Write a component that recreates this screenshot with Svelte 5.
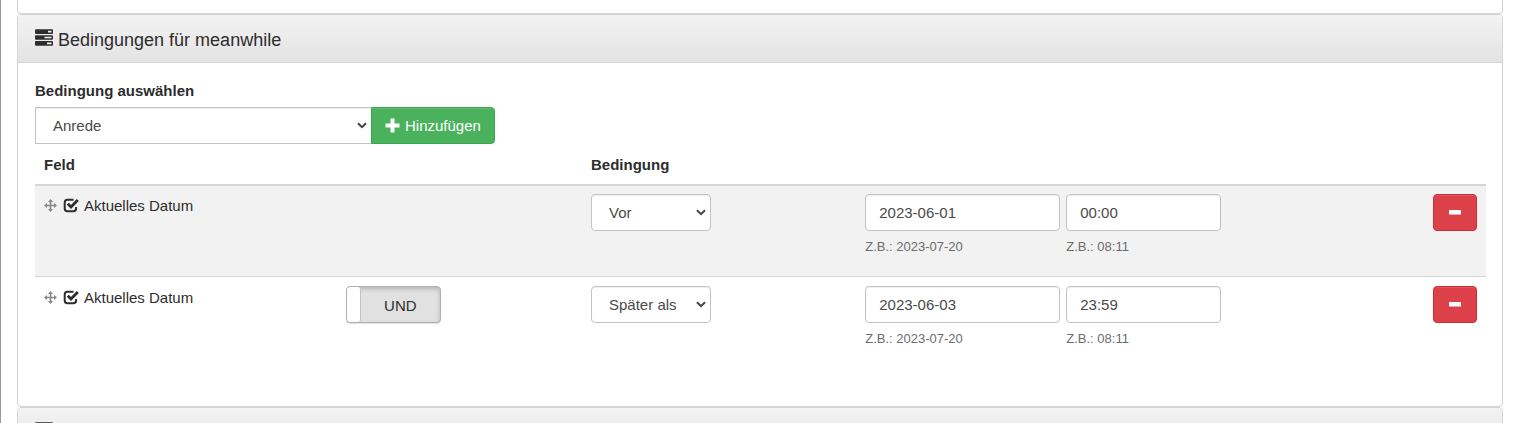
<script lang="ts">
	interface Condition {
		id: number;
		field: string;
		operator: string;
		date: string;
		time: string;
		and: boolean;
	}

	const fields = ['Anrede', 'Aktuelles Datum'];
	const operators = ['Vor', 'Später als'];

	let selectedField = $state('Anrede');
	let nextId = $state(3);
	let conditions = $state<Condition[]>([
		{ id: 1, field: 'Aktuelles Datum', operator: 'Vor', date: '2023-06-01', time: '00:00', and: true },
		{ id: 2, field: 'Aktuelles Datum', operator: 'Später als', date: '2023-06-03', time: '23:59', and: true },
	]);

	function add() {
		conditions.push({ id: nextId++, field: selectedField, operator: 'Vor', date: '', time: '', and: true });
	}

	function remove(id: number) {
		conditions = conditions.filter((c) => c.id !== id);
	}
</script>

{#snippet tasksIcon()}
	<svg class="tasks" viewBox="0 0 18 17" aria-hidden="true">
		<rect x="0" y="0.3" width="18" height="4.6" rx="1" />
		<rect x="0" y="6.2" width="18" height="4.6" rx="1" />
		<rect x="0" y="12.1" width="18" height="4.6" rx="1" />
		<path fill="#f0f0f0" d="M13 1.8h3.5v1.6H13zM9.5 7.7h7v1.6h-7zM12 13.6h4.5v1.6H12z" />
	</svg>
{/snippet}

<div class="page">
	<div class="panel previous"></div>

	<section class="panel">
		<header class="panel-heading">
			{@render tasksIcon()}
			<h3>Bedingungen für meanwhile</h3>
		</header>

		<div class="panel-body">
			<label class="field-label" for="field">Bedingung auswählen</label>
			<div class="input-group">
				<select id="field" class="control" bind:value={selectedField}>
					{#each fields as field (field)}
						<option value={field}>{field}</option>
					{/each}
				</select>
				<button type="button" class="btn add" onclick={add}>
					<svg width="15" height="15" viewBox="0 0 15 15" aria-hidden="true">
						<path fill="#fff" d="M5.5 0.5h4v5h5v4h-5v5h-4v-5h-5v-4h5z" />
					</svg>
					Hinzufügen
				</button>
			</div>

			<table>
				<colgroup>
					<col class="col-field" />
					<col class="col-link" />
					<col class="col-operator" />
					<col />
					<col class="col-remove" />
				</colgroup>
				<thead>
					<tr>
						<th>Feld</th>
						<th></th>
						<th>Bedingung</th>
						<th></th>
						<th></th>
					</tr>
				</thead>
				<tbody>
					{#each conditions as condition, i (condition.id)}
						<tr>
							<td>
								<div class="field-name">
									<svg class="move" width="13" height="13" viewBox="0 0 13 13" aria-hidden="true">
										<path fill="none" stroke="#888" stroke-width="1.6" d="M6.5 2v9M2 6.5h9" />
										<path
											fill="#888"
											d="M6.5 0L9 3H4zM6.5 13L4 10h5zM0 6.5L3 4v5zM13 6.5L10 9V4z"
										/>
									</svg>
									<svg width="16" height="15" viewBox="0 0 16 15" aria-hidden="true">
										<path
											fill="none"
											stroke="#2d2d2d"
											stroke-width="2"
											d="M10.5 1.7H4.5Q1.7 1.7 1.7 4.5v6q0 2.8 2.8 2.8h5.8q2.8 0 2.8-2.8V9"
										/>
										<path fill="none" stroke="#2d2d2d" stroke-width="2.8" d="M4.8 5.8l3.2 3.2L14.8 2" />
									</svg>
									<span>{condition.field}</span>
								</div>
							</td>
							<td>
								{#if i > 0}
									<label class="toggle">
										<input type="checkbox" bind:checked={condition.and} />
										<span class="handle"></span>
										<span class="toggle-text">{condition.and ? 'UND' : 'ODER'}</span>
									</label>
								{/if}
							</td>
							<td>
								<select class="control operator" aria-label="Bedingung" bind:value={condition.operator}>
									{#each operators as operator (operator)}
										<option value={operator}>{operator}</option>
									{/each}
								</select>
							</td>
							<td>
								<div class="moment">
									<div class="date">
										<input
											class="control"
											type="text"
											aria-label="Datum"
											aria-describedby="date-hint-{condition.id}"
											bind:value={condition.date}
										/>
										<span class="hint" id="date-hint-{condition.id}">Z.B.: 2023-07-20</span>
									</div>
									<div class="time">
										<input
											class="control"
											type="text"
											aria-label="Uhrzeit"
											aria-describedby="time-hint-{condition.id}"
											bind:value={condition.time}
										/>
										<span class="hint" id="time-hint-{condition.id}">Z.B.: 08:11</span>
									</div>
								</div>
							</td>
							<td class="actions">
								<button type="button" class="btn remove" aria-label="Entfernen" onclick={() => remove(condition.id)}>
									<svg width="12" height="5" viewBox="0 0 12 5" aria-hidden="true">
										<rect width="12" height="4.5" rx="0.5" fill="#fff" />
									</svg>
								</button>
							</td>
						</tr>
					{/each}
				</tbody>
			</table>
		</div>
	</section>

	<section class="panel">
		<header class="panel-heading">
			{@render tasksIcon()}
		</header>
	</section>
</div>

<style>
	:global(body) {
		margin: 0;
		background: #fff;
	}

	.page {
		box-sizing: border-box;
		height: 100vh;
		overflow: hidden;
		padding: 0 14px 0 16px;
		border-left: 1px solid #999;
		font-family: 'Liberation Sans', Arial, sans-serif;
		font-size: 15px;
		line-height: 21px;
		color: #2d2d2d;
	}

	.panel {
		border: 1px solid #d5d5d5;
		border-radius: 4px;
	}

	.previous {
		height: 13px;
		border-top: 0;
		border-radius: 0 0 4px 4px;
	}

	.panel-heading {
		display: flex;
		align-items: flex-start;
		gap: 5px;
		box-sizing: border-box;
		height: 48px;
		padding: 14px 17px;
		border-bottom: 1px solid #d5d5d5;
		border-radius: 3px 3px 0 0;
		background: linear-gradient(#f3f3f3, #e3e3e3);
	}

	.tasks {
		width: 18px;
		height: 17px;
		fill: #2d2d2d;
	}

	h3 {
		margin: 0;
		font-size: 18px;
		font-weight: normal;
		line-height: 23px;
	}

	.panel-body {
		padding: 17px 16px 38px 17px;
	}

	.field-label {
		display: block;
		margin-bottom: 6px;
		font-weight: bold;
	}

	.input-group {
		display: flex;
	}

	.control {
		box-sizing: border-box;
		width: 100%;
		height: 37px;
		padding: 0 13px;
		border: 1px solid #c3c3c3;
		border-radius: 4px;
		background-color: #fff;
		box-shadow: inset 0 1px 1px rgba(0, 0, 0, 0.07);
		font: inherit;
		color: #4a4a4a;
	}

	select.control {
		appearance: none;
		padding: 0 17px;
		background-image: url("data:image/svg+xml,%3Csvg xmlns='http://www.w3.org/2000/svg' viewBox='0 0 10 7'%3E%3Cpath fill='none' stroke='%23444' stroke-width='2' d='M1 1.2l4 4 4-4'/%3E%3C/svg%3E");
		background-position: right 4px center;
		background-repeat: no-repeat;
		background-size: 10px 7px;
	}

	.input-group .control {
		width: 336px;
		border-right: 0;
		border-radius: 0;
	}

	.btn {
		display: inline-flex;
		align-items: center;
		justify-content: center;
		height: 37px;
		padding: 0 13px;
		border: 1px solid;
		border-radius: 4px;
		box-shadow: inset 0 1px 0 rgba(255, 255, 255, 0.12);
		font: inherit;
		color: #fff;
		cursor: pointer;
	}

	.add {
		gap: 5px;
		border-color: #3ba650;
		border-radius: 0 4px 4px 0;
		background: #4ab15c;
	}

	.remove {
		width: 44px;
		border-color: #d42a35;
		background: #dc4048;
	}

	table {
		width: 100%;
		table-layout: fixed;
		border-collapse: separate;
		border-spacing: 0;
	}

	.col-field {
		width: 20.8%;
	}

	.col-link {
		width: 16.9%;
	}

	.col-operator {
		width: 18.9%;
	}

	.col-remove {
		width: 10%;
	}

	th {
		height: 21px;
		padding: 10px 9px 9px;
		border-bottom: 2px solid #d5d5d5;
		text-align: left;
	}

	td {
		height: 73px;
		padding: 8px 9px 9px;
		vertical-align: top;
	}

	tbody tr:nth-child(odd) {
		background: #f2f2f2;
	}

	tbody tr + tr td {
		border-top: 1px solid #d5d5d5;
		padding-top: 9px;
	}

	.field-name {
		display: flex;
		align-items: center;
		gap: 5px;
		line-height: 23px;
	}

	.move {
		margin-right: 1px;
	}

	.toggle {
		display: flex;
		box-sizing: border-box;
		width: 95px;
		height: 37px;
		overflow: hidden;
		border: 1px solid #b0b0b0;
		border-radius: 4px;
		background: #e1e1e1;
		box-shadow: inset 0 2px 4px rgba(0, 0, 0, 0.2), 0 1px 1px rgba(0, 0, 0, 0.12);
		cursor: pointer;
	}

	.toggle input {
		position: absolute;
		opacity: 0;
	}

	.handle {
		width: 13px;
		border-right: 1px solid #c3c3c3;
		border-radius: 3px;
		background: #fff;
	}

	.toggle-text {
		flex: 1;
		line-height: 37px;
		text-align: center;
	}

	.operator {
		width: 120px;
	}

	.moment {
		display: flex;
		gap: 6px;
	}

	.date {
		width: 195px;
	}

	.time {
		width: 155px;
	}

	.hint {
		display: block;
		margin-top: 6px;
		font-size: 13px;
		line-height: 20px;
		color: #6c6c6c;
	}

	.actions {
		text-align: right;
	}
</style>
